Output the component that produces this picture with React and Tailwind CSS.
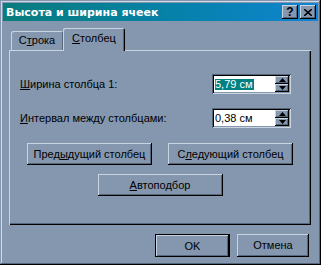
import React from "react";

const raised =
    "bg-[#8497af] shadow-[inset_-1px_-1px_0_#000,inset_1px_1px_0_#c8d4e0,inset_-2px_-2px_0_#56667a,inset_2px_2px_0_#8497af]";
const sunken =
    "bg-white shadow-[inset_1px_1px_0_#56667a,inset_-1px_-1px_0_#c8d4e0,inset_2px_2px_0_#000,inset_-2px_-2px_0_#8497af]";

function Btn({ children, className = "" }) {
    return (
        <div className={`${raised} h-[22px] flex items-center justify-center ${className}`}>
            {children}
        </div>
    );
}

function Arrow({ up }) {
    return (
        <svg width="7" height="4" viewBox="0 0 7 4">
            {up ? <polygon points="3.5,0 7,4 0,4" fill="#000" /> : <polygon points="0,0 7,0 3.5,4" fill="#000" />}
        </svg>
    );
}

function SpinEdit({ value, selected }) {
    return (
        <div className={`${sunken} w-[79px] h-[20px] p-[2px] flex`}>
            <div className="flex-1 flex items-center pl-[1px]">
                <span className={selected ? "bg-[#008080] text-white pr-[1px]" : "pr-[1px]"}>{value}</span>
            </div>
            <div className="w-[14px] flex flex-col">
                <div className={`${raised} h-[8px] flex items-center justify-center`}>
                    <Arrow up />
                </div>
                <div className={`${raised} h-[8px] flex items-center justify-center`}>
                    <Arrow />
                </div>
            </div>
        </div>
    );
}

export default function App() {
    return (
        <div className="w-[321px] h-[265px] bg-[#8497af] p-[3px] flex flex-col text-[11px] leading-none text-black font-['Liberation_Sans',sans-serif] shadow-[inset_-1px_-1px_0_#000,inset_1px_1px_0_#8497af,inset_-2px_-2px_0_#56667a,inset_2px_2px_0_#d0dae6]">
            {/* title bar */}
            <div className="h-[18px] bg-linear-to-r from-[#0a7c7c] to-[#1084d0] flex items-center pl-[3px] pr-[2px]">
                <span className="flex-1 text-white font-bold text-[11px] font-['DejaVu_Sans',sans-serif]">Высота и ширина ячеек</span>
                <div className={`${raised} w-[16px] h-[14px] flex items-center justify-center font-bold text-[12px]`}>?</div>
                <div className={`${raised} w-[16px] h-[14px] ml-[2px] flex items-center justify-center`}>
                    <svg width="8" height="7" viewBox="0 0 8 7">
                        <path d="M0 0 L8 7 M8 0 L0 7" stroke="#000" strokeWidth="1.6" />
                    </svg>
                </div>
            </div>

            {/* tabs */}
            <div className="mt-[7px] ml-[6px] flex items-end h-[22px] relative z-10">
                <div className="ml-[2px] w-[52px] h-[19px] rounded-t-[2px] flex items-center justify-center shadow-[inset_1px_1px_0_#c8d4e0,inset_-1px_0_0_#56667a]">
                    <span>
                        С<span className="underline">т</span>рока
                    </span>
                </div>
                <div className="w-[62px] h-[23px] -mb-[1px] bg-[#8497af] rounded-t-[2px] flex items-center justify-center pb-[2px] shadow-[inset_1px_1px_0_#c8d4e0,inset_-1px_0_0_#000,inset_-2px_0_0_#56667a]">
                    <span>
                        <span className="underline">С</span>толбец
                    </span>
                </div>
            </div>

            {/* panel */}
            <div className="ml-[6px] w-[302px] h-[175px] flex flex-col pt-[24px] px-[11px] shadow-[inset_1px_1px_0_#c8d4e0,inset_-1px_-1px_0_#000,inset_-2px_-2px_0_#56667a]">
                <div className="flex items-center justify-between pr-[9px]">
                    <span>
                        <span className="underline">Ш</span>ирина столбца 1:
                    </span>
                    <SpinEdit value="5,79 см" selected />
                </div>
                <div className="flex items-center justify-between pr-[9px] mt-[14px]">
                    <span>
                        <span className="underline">И</span>нтервал между столбцами:
                    </span>
                    <SpinEdit value="0,38 см" />
                </div>
                <div className="flex justify-center gap-[16px] mt-[15px] -mx-[11px]">
                    <Btn className="w-[125px]">
                        <span>
                            Пред<span className="underline">ы</span>дущий столбец
                        </span>
                    </Btn>
                    <Btn className="w-[125px]">
                        <span>
                            С<span className="underline">л</span>едующий столбец
                        </span>
                    </Btn>
                </div>
                <div className="flex justify-center mt-[9px] -mx-[11px]">
                    <Btn className="w-[125px]">
                        <span>
                            <span className="underline">А</span>втоподбор
                        </span>
                    </Btn>
                </div>
            </div>

            {/* bottom buttons */}
            <div className="flex justify-end gap-[7px] mt-[9px] pr-[9px]">
                <div className="w-[75px] h-[23px] border border-black">
                    <Btn className="h-[21px]">OK</Btn>
                </div>
                <Btn className="w-[72px] h-[23px]">Отмена</Btn>
            </div>
        </div>
    );
}
